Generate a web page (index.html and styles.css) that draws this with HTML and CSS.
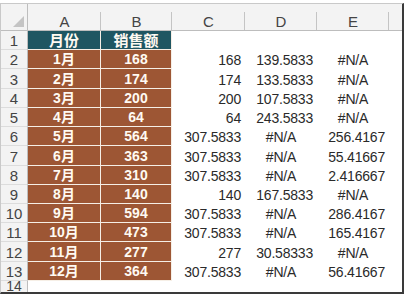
FILE: index.html
```html
<!DOCTYPE html>
<html>
<head>
<meta charset="utf-8">
<link rel="stylesheet" href="styles.css">
</head>
<body>
<div class="frame">
  <div class="sheet">
    <div class="hd corner"><span class="tri"></span></div>
    <div class="hd col">A</div>
    <div class="hd col">B</div>
    <div class="hd col">C</div>
    <div class="hd col">D</div>
    <div class="hd col">E</div>
    <div class="hd col last"></div>

    <div class="rh">1</div><div class="c t">月份</div><div class="c t">销售额</div><div class="v"></div><div class="v"></div><div class="v"></div><div class="v"></div>
    <div class="rh">2</div><div class="c b">1月</div><div class="c b">168</div><div class="v r">168</div><div class="v r">139.5833</div><div class="v m">#N/A</div><div class="v"></div>
    <div class="rh">3</div><div class="c b">2月</div><div class="c b">174</div><div class="v r">174</div><div class="v r">133.5833</div><div class="v m">#N/A</div><div class="v"></div>
    <div class="rh">4</div><div class="c b">3月</div><div class="c b">200</div><div class="v r">200</div><div class="v r">107.5833</div><div class="v m">#N/A</div><div class="v"></div>
    <div class="rh">5</div><div class="c b">4月</div><div class="c b">64</div><div class="v r">64</div><div class="v r">243.5833</div><div class="v m">#N/A</div><div class="v"></div>
    <div class="rh">6</div><div class="c b">5月</div><div class="c b">564</div><div class="v r">307.5833</div><div class="v m">#N/A</div><div class="v r">256.4167</div><div class="v"></div>
    <div class="rh">7</div><div class="c b">6月</div><div class="c b">363</div><div class="v r">307.5833</div><div class="v m">#N/A</div><div class="v r">55.41667</div><div class="v"></div>
    <div class="rh">8</div><div class="c b">7月</div><div class="c b">310</div><div class="v r">307.5833</div><div class="v m">#N/A</div><div class="v r">2.416667</div><div class="v"></div>
    <div class="rh">9</div><div class="c b">8月</div><div class="c b">140</div><div class="v r">140</div><div class="v r">167.5833</div><div class="v m">#N/A</div><div class="v"></div>
    <div class="rh">10</div><div class="c b">9月</div><div class="c b">594</div><div class="v r">307.5833</div><div class="v m">#N/A</div><div class="v r">286.4167</div><div class="v"></div>
    <div class="rh">11</div><div class="c b">10月</div><div class="c b">473</div><div class="v r">307.5833</div><div class="v m">#N/A</div><div class="v r">165.4167</div><div class="v"></div>
    <div class="rh">12</div><div class="c b">11月</div><div class="c b">277</div><div class="v r">277</div><div class="v r">30.58333</div><div class="v m">#N/A</div><div class="v"></div>
    <div class="rh">13</div><div class="c b">12月</div><div class="c b">364</div><div class="v r">307.5833</div><div class="v m">#N/A</div><div class="v r">56.41667</div><div class="v"></div>
    <div class="rh end">14</div><div class="v"></div><div class="v"></div><div class="v"></div><div class="v"></div><div class="v"></div><div class="v"></div>
  </div>
</div>
</body>
</html>
```

FILE: styles.css
```css
html, body {
  margin: 0;
  padding: 0;
  background: #ffffff;
}
body {
  width: 404px;
  height: 295px;
  overflow: hidden;
  font-family: "Liberation Sans", Arial, "Noto Sans CJK SC", sans-serif;
}
.frame {
  box-sizing: border-box;
  width: 404px;
  height: 291px;
  margin-top: 3px;
  border-top: 1px solid #c9c9c9;
  border-left: 1px solid #c9c9c9;
  border-right: 2px solid #3a3a3a;
  border-bottom: 2px solid #3a3a3a;
  overflow: hidden;
}
.sheet {
  display: grid;
  grid-template-columns: 27px 73px 71px 73px 72px 72px 1fr;
  grid-template-rows: 27px repeat(13, 19.23px) 1fr;
  height: 100%;
}
.hd {
  box-sizing: border-box;
  background: #f3f3f3;
  border-bottom: 1px solid #bdbdbd;
  position: relative;
  color: #444;
  font-size: 15px;
  display: flex;
  align-items: flex-end;
  justify-content: center;
  line-height: 17px;
}
.hd.col::after {
  content: "";
  position: absolute;
  right: 0;
  top: 8px;
  bottom: 0;
  width: 1px;
  background: #c4c4c4;
}
.hd.last::after { display: none; }
.corner {
  border-right: 1px solid #bdbdbd;
}
.tri {
  position: absolute;
  right: 3px;
  bottom: 3px;
  width: 0;
  height: 0;
  border-left: 11px solid transparent;
  border-bottom: 11px solid #c4c4c4;
}
.rh {
  box-sizing: border-box;
  background: #f3f3f3;
  border-right: 1px solid #bdbdbd;
  border-bottom: 1px solid #dcdcdc;
  color: #444;
  font-size: 15px;
  display: flex;
  align-items: flex-end;
  justify-content: center;
  line-height: 17px;
}
.rh.end {
  align-items: flex-start;
  line-height: 11px;
  font-size: 14px;
  padding-top: 0;
  border-bottom: none;
}
.c {
  box-sizing: border-box;
  border-right: 1px solid #f6efe6;
  border-bottom: 1px solid #f6efe6;
  color: #fffaf2;
  font-weight: bold;
  font-size: 14px;
  display: flex;
  align-items: flex-end;
  justify-content: center;
  line-height: 17px;
  font-family: "Liberation Sans", Arial, "Noto Sans CJK SC", sans-serif;
}
.c.t {
  background: #1f5662;
  font-size: 15px;
}
.c.b {
  background: #9d5634;
}
.v {
  box-sizing: border-box;
  color: #2a2a2a;
  font-size: 14px;
  letter-spacing: -0.2px;
  display: flex;
  align-items: flex-end;
  line-height: 17px;
}
.v.r {
  justify-content: flex-end;
  padding-right: 4px;
}
.v.m {
  justify-content: center;
}
```
